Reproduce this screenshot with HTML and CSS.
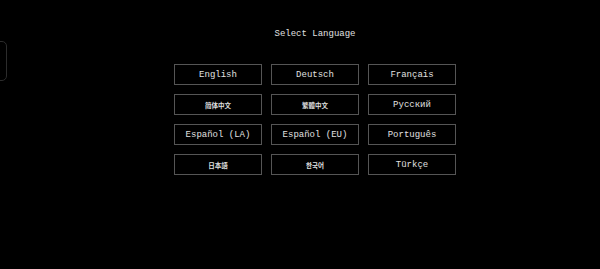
FILE: index.html
```html
<!DOCTYPE html>
<html lang="en">

<head>
    <meta charset="UTF-8">
    <meta name="viewport" content="width=device-width, initial-scale=1.0">
    <title>Select Language</title>
    <link rel="stylesheet" href="styles.css">
</head>

<body>
    <div class="screen">
        <!-- Side tab -->
        <aside class="side">
            <div class="side-tab"></div>
        </aside>

        <!-- Language picker -->
        <main class="picker">
            <h1 class="title">Select Language</h1>
            <div class="lang-grid">
                <button class="lang">English</button>
                <button class="lang">Deutsch</button>
                <button class="lang">Français</button>
                <button class="lang cjk">简体中文</button>
                <button class="lang cjk">繁體中文</button>
                <button class="lang">Русский</button>
                <button class="lang">Español (LA)</button>
                <button class="lang">Español (EU)</button>
                <button class="lang">Português</button>
                <button class="lang cjk">日本語</button>
                <button class="lang cjk">한국어</button>
                <button class="lang">Türkçe</button>
            </div>
        </main>
    </div>
</body>

</html>
```

FILE: styles.css
```css
body {
    background-color: #000;
    color: #e0e0e0;
    font-family: "Liberation Mono", "DejaVu Sans Mono", monospace;
    margin: 0;
    padding: 0;
    height: 269px;
    overflow: hidden;
}

.screen {
    display: flex;
    height: 100%;
}

.side {
    width: 30px;
    flex-shrink: 0;
}

.side-tab {
    width: 10px;
    height: 38px;
    margin-top: 41px;
    margin-left: -5px;
    border: 1px solid #2c2c2c;
    border-radius: 5px;
}

.picker {
    flex: 1;
    display: flex;
    flex-direction: column;
    align-items: center;
    padding-top: 28px;
}

.title {
    margin: 0;
    font-size: 9px;
    font-weight: normal;
    line-height: 12px;
}

.lang-grid {
    display: grid;
    grid-template-columns: repeat(3, 88px);
    grid-auto-rows: 21px;
    column-gap: 9px;
    row-gap: 9px;
    margin-top: 24px;
}

.lang {
    background: transparent;
    border: 1px solid #555;
    color: #e0e0e0;
    font-family: inherit;
    font-size: 9px;
    padding: 0;
    margin: 0;
}

.lang.cjk {
    font-family: "Noto Sans CJK SC", "Noto Sans CJK KR", sans-serif;
    font-size: 6.5px;
    font-weight: bold;
}
```
